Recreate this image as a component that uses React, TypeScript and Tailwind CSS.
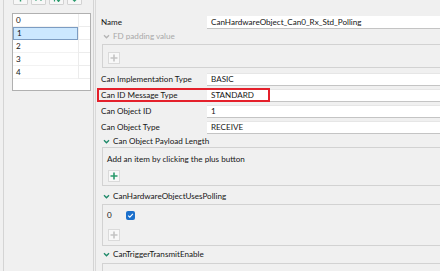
import React from "react";

function Caret({ disabled }: { disabled?: boolean }) {
  return (
    <svg width="7" height="5" viewBox="0 0 7 5" className="shrink-0">
      <path
        d="M1 1.2 L3.5 3.7 L6 1.2"
        fill="none"
        stroke={disabled ? "#b4b4b4" : "#1f8a6a"}
        strokeWidth="1.4"
      />
    </svg>
  );
}

function PlusButton({ disabled }: { disabled?: boolean }) {
  return (
    <div className="flex h-[12px] w-[12px] items-center justify-center border border-[#dadada] bg-[#f8f8f8]">
      <svg width="8" height="8" viewBox="0 0 8 8">
        <path
          d="M4 0.5 V7.5 M0.5 4 H7.5"
          stroke={disabled ? "#c4c4c4" : "#2a9a6c"}
          strokeWidth="1.6"
        />
      </svg>
    </div>
  );
}

function Header({ label, disabled, className }: { label: string; disabled?: boolean; className: string }) {
  return (
    <div className={`flex items-center pl-[7px] ${className}`}>
      <Caret disabled={disabled} />
      <span className={`ml-[3px] whitespace-nowrap ${disabled ? "text-[#a9a9a9]" : ""}`}>{label}</span>
    </div>
  );
}

function Row({ label, value }: { label: string; value: string }) {
  return (
    <div className="flex h-[16px] items-center pl-[5px]">
      <span className="w-[106px] shrink-0 whitespace-nowrap">{label}</span>
      <div className="flex h-[13px] flex-1 items-center border-b border-t border-b-[#c4c4c4] border-t-[#e6e6e6] bg-white pl-[4px]">
        <span className="whitespace-nowrap">{value}</span>
      </div>
    </div>
  );
}

function ToolIcon({ kind }: { kind: number }) {
  const c = "#2a9a6c";
  return (
    <div className="flex h-[15px] w-[15px] items-center justify-center rounded-[1px] border border-[#d2d2d2] bg-[#f7f7f7]">
      <svg width="9" height="9" viewBox="0 0 9 9">
        {kind === 0 && <path d="M4.5 8.5 V1 M1.5 4 L4.5 1 L7.5 4" stroke={c} strokeWidth="1.4" fill="none" />}
        {kind === 1 && <path d="M1.5 1.5 L7.5 7.5 M7.5 1.5 L1.5 7.5" stroke={c} strokeWidth="1.4" fill="none" />}
        {kind === 2 && <path d="M2.5 8.5 V1 M6.5 8.5 V1 M1 3 L2.5 1 L4 3 M5 6.5 L6.5 8.5 L8 6.5" stroke={c} strokeWidth="1.2" fill="none" />}
        {kind === 3 && <path d="M4.5 0.5 V8 M1.5 5 L4.5 8 L7.5 5" stroke={c} strokeWidth="1.4" fill="none" />}
      </svg>
    </div>
  );
}

export default function App() {
  const items = ["0", "1", "2", "3", "4"];
  return (
    <div className="relative flex h-[271px] w-[440px] overflow-hidden bg-[#f0f0f0] text-[8.1px] leading-none text-[#161616] [font-family:Lato,'Liberation_Sans',sans-serif]">
      {/* left panel */}
      <div className="ml-[3px] h-full w-[91px] shrink-0 border-x border-[#d4d4d4]">
        <div className="-mt-[10px] ml-[9px] flex gap-[3px]">
          {[0, 1, 2, 3].map((k) => (
            <ToolIcon key={k} kind={k} />
          ))}
        </div>
        <div className="ml-[8px] mt-[8px] h-[78px] w-[79px] border border-[#b0b0b0] bg-white">
          {items.map((it, i) => (
            <div key={it} className="flex h-[13px]">
              <div
                className={`flex w-[65px] items-center pl-[3px] ${
                  i === 1 ? "border border-[#7c9cc2] bg-[#cce8ff] pl-[2px]" : "border-b border-[#f2f2f2]"
                }`}
              >
                {it}
              </div>
              <div className="flex-1 border-b border-l border-[#ececec]" />
            </div>
          ))}
        </div>
      </div>
      <div className="ml-[1px] h-full w-px shrink-0 bg-[#d9d9d9]" />

      {/* right panel */}
      <div className="min-w-0 flex-1 pt-[16px]">
        <div className="flex h-[13px] items-center pl-[5px]">
          <span className="w-[106px] shrink-0">Name</span>
          <div className="flex h-[13px] flex-1 items-center border-b border-[#c4c4c4] bg-white pl-[4px]">
            <span className="whitespace-nowrap">CanHardwareObject_Can0_Rx_Std_Polling</span>
          </div>
        </div>
        <Header label="FD padding value" disabled className="h-[15px]" />
        <div className="ml-[6px] h-[24px] border-y border-l border-[#d2d2d2] pl-[5px] pt-[7px]">
          <PlusButton disabled />
        </div>
        <div className="mt-[3px]">
          <Row label="Can Implementation Type" value="BASIC" />
          <Row label="Can ID Message Type" value="STANDARD" />
          <Row label="Can Object ID" value="1" />
          <Row label="Can Object Type" value="RECEIVE" />
        </div>
        <Header label="Can Object Payload Length" className="h-[12px] pt-[1px]" />
        <div className="ml-[6px] h-[39px] border-y border-l border-[#d2d2d2] pl-[4px]">
          <div className="mt-[6px] flex h-[10px] items-center whitespace-nowrap">Add an item by clicking the plus button</div>
          <div className="ml-[1px] mt-[6px]">
            <PlusButton />
          </div>
        </div>
        <Header label="CanHardwareObjectUsesPolling" className="h-[18px] pt-[2px]" />
        <div className="ml-[6px] h-[42px] border-y border-l border-[#d2d2d2] pl-[4px]">
          <div className="mt-[5px] flex h-[10px] items-center">
            <span className="w-[19px]">0</span>
            <div className="flex h-[9px] w-[9px] items-center justify-center rounded-[2px] bg-[#1b6fcb]">
              <svg width="7" height="7" viewBox="0 0 7 7">
                <path d="M1.2 3.6 L2.8 5.1 L5.9 1.8" stroke="#fff" strokeWidth="1.1" fill="none" />
              </svg>
            </div>
          </div>
          <div className="ml-[1px] mt-[9px]">
            <PlusButton disabled />
          </div>
        </div>
        <Header label="CanTriggerTransmitEnable" className="h-[17px]" />
        <div className="ml-[6px] h-[40px] border-y border-l border-[#d2d2d2] pl-[4px]">
          <div className="mt-[5px] flex h-[10px] items-center whitespace-nowrap">Add an item by clicking the plus button</div>
        </div>
      </div>

      {/* annotation */}
      <div className="absolute left-[97px] top-[88px] h-[14px] w-[173px] border-2 border-[#e4202b]" />
    </div>
  );
}
